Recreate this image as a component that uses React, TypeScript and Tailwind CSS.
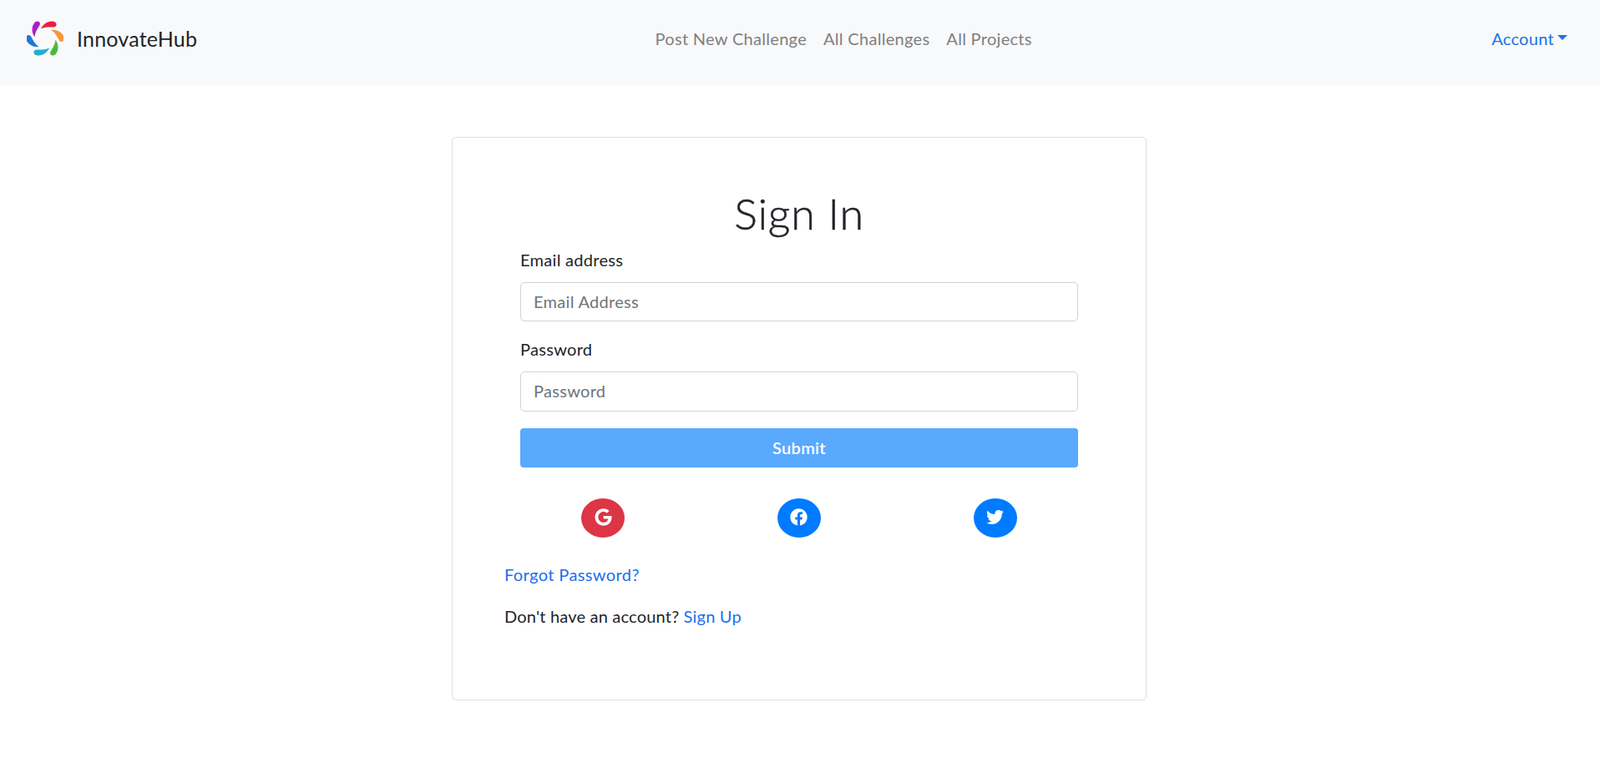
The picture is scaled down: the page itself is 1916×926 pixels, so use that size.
import { FaFacebook, FaGoogle, FaTwitter } from "react-icons/fa";

const petals = ["#ee1c3f", "#f7963c", "#4cb83a", "#1fb0cf", "#1f79d8", "#a81fc8"];

const Logo = () => (
  <svg width="44" height="44" viewBox="-22 -22 44 44">
    {petals.map((color, index) => (
      <path
        key={color}
        d="M-5 -11.5C-2.5 -17 3 -21 9 -20.5C15 -20 15 -13.5 10 -13.5C5 -13.5 0 -14 -5 -11.5Z"
        fill={color}
        transform={`rotate(${index * 60})`}
      />
    ))}
  </svg>
);

const SocialButton = ({ color, children }: { color: string; children: React.ReactNode }) => (
  <div className="flex justify-center">
    <button className={`${color} w-[52px] h-[47px] rounded-[50%] flex items-center justify-center pb-[3px] text-white text-[21px]`}>
      {children}
    </button>
  </div>
);

const App = () => {
  return (
    <div className="min-h-[926px] bg-white font-['Lato','Open_Sans',sans-serif] text-[20px] tracking-[0.3px] text-[#212529]">
      <nav className="h-[102px] bg-[#f8f9fa] flex items-start justify-between pl-8 pr-[39px] pt-6">
        <a className="flex items-center gap-[16px] text-[25px] tracking-[0.2px] text-[#212529] leading-[44px]">
          <Logo />
          InnovateHub
        </a>
        <div className="flex gap-5 text-[#7f8081] leading-[44px] -ml-[2px]">
          <a>Post New Challenge</a>
          <a>All Challenges</a>
          <a>All Projects</a>
        </div>
        <a className="flex items-center gap-1 text-[#1a73e8] leading-[44px]">
          Account
          <span className="mb-[3px] border-x-[6px] border-t-[6px] border-x-transparent border-t-[#1a73e8]" />
        </a>
      </nav>

      <div className="w-[832px] h-[675px] ml-[541px] mt-[62px] border border-[#dfdfdf] rounded-[5px] pt-[62px] px-[63px]">
        <h1 className="text-center text-[52px] font-light tracking-[0.8px] leading-[56px] [-webkit-text-stroke:0.5px_#212529]">Sign In</h1>

        <div className="mx-[18px] mt-[15px]">
          <label className="block leading-[26px] mb-[14px]">Email address</label>
          <input
            placeholder="Email Address"
            className="block w-full h-[47px] px-[15px] pb-[2px] border border-[#ced4da] rounded-[5px] placeholder:text-[#6c757d] outline-none"
          />
          <label className="block leading-[26px] mt-5 mb-[14px]">Password</label>
          <input
            placeholder="Password"
            className="block w-full h-[48px] px-[15px] pb-[2px] border border-[#ced4da] rounded-[5px] placeholder:text-[#6c757d] outline-none"
          />
          <button className="block w-full h-[47px] mt-5 pb-[2px] rounded-[4px] bg-[#59a9ff] text-white font-semibold">
            Submit
          </button>

          <div className="grid grid-cols-3 -mx-[18px] mt-[37px]">
            <SocialButton color="bg-[#dc3545]"><FaGoogle /></SocialButton>
            <SocialButton color="bg-[#007bff]"><FaFacebook /></SocialButton>
            <SocialButton color="bg-[#007bff]"><FaTwitter /></SocialButton>
          </div>
        </div>

        <p className="mt-[31px] leading-[26px] -ml-px tracking-[0.4px] text-[#1a6ff0]">Forgot Password?</p>
        <p className="mt-6 leading-[26px] -ml-px tracking-[0.2px]">
          Don't have an account? <a className="text-[#1a6ff0]">Sign Up</a>
        </p>
      </div>
    </div>
  );
};

export default App;
